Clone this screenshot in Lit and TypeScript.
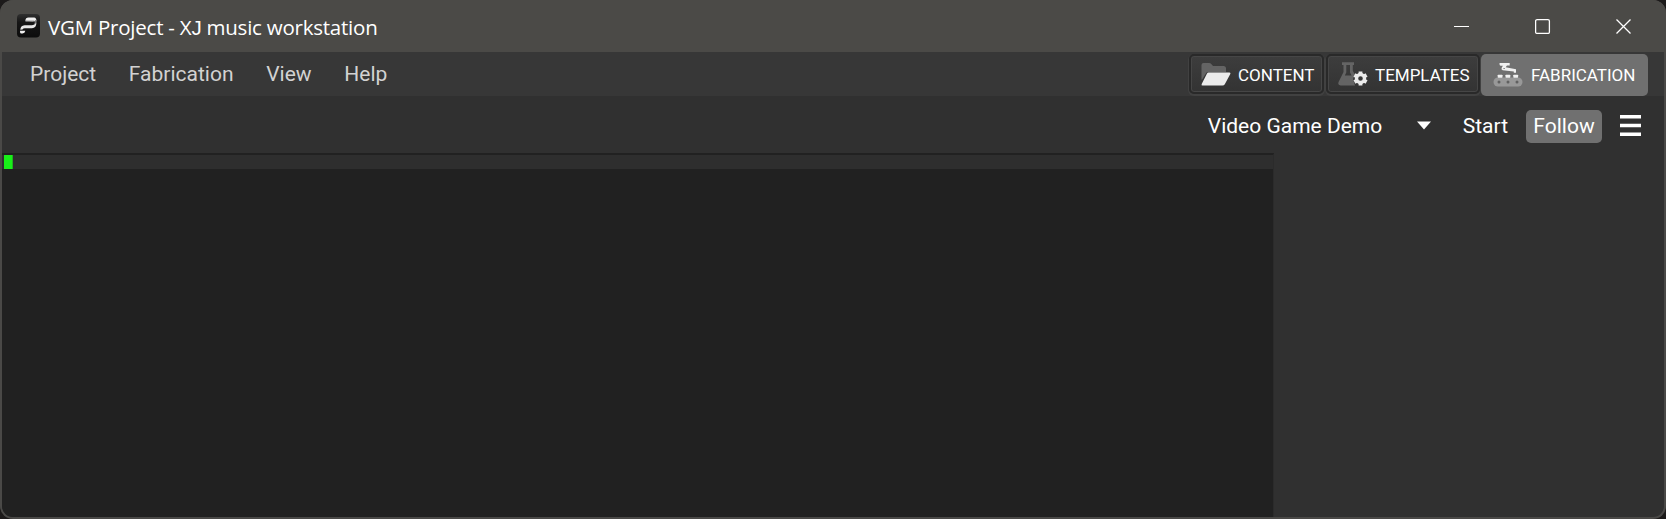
import { LitElement, html, css, svg } from "lit";
import { customElement } from "lit/decorators.js";

const logo = svg`<svg width="24" height="26" viewBox="0.5 -1 24 26">
  <defs><linearGradient id="lg" x1="0" y1="0" x2="0" y2="1"><stop offset="0" stop-color="#303030"/><stop offset="0.35" stop-color="#161616"/><stop offset="1" stop-color="#0c0c0c"/></linearGradient></defs>
  <rect x="0.5" y="0" width="23" height="23.5" rx="4" fill="url(#lg)"/>
  <path d="M8.800 6.800Q9 3.600 12 3.500H17.500Q20.300 3.800 19.800 7.500Z" fill="#f0f0f0"/>
  <path d="M18.800 6H20Q20.200 9.500 18.800 11L17.500 11.500Z" fill="#777"/>
  <path d="M9.500 6.200H18.500L16.500 7.400H8.800Z" fill="#bbb"/>
  <path d="M3.800 15.700Q4 11.500 8 11.200H15.500Q18.600 11 19.900 8.500Q19.900 14 15.500 14.300H8.500Q6.500 14.300 6 15.600Z" fill="#e6e6e6"/>
  <path d="M3.500 16.800H8.800Q8.400 19.300 6 19.600H4.300Q3.300 19 3.500 16.800Z" fill="#f0f0f0"/></svg>`;

const folder = svg`<svg width="30" height="24" viewBox="0 0 30 24">
  <path d="M0.500 17V3Q0.500 1 2.500 1H8Q9.500 1 10.500 2.200L12 4H22.500Q25 4 25 6.500V10H7Q5.800 10 5.200 11L0.800 18Z" fill="#646464"/>
  <path d="M7.500 10.500H28.500Q30 10.500 29.300 12L23.800 22.200Q23 23.500 21.500 23.500H1.500Q0 23.500 0.700 22L6 11.500Q6.500 10.500 7.500 10.500Z" fill="#ebebeb"/></svg>`;

const flask = svg`<svg width="30" height="24" viewBox="0 0 30 24">
  <path d="M4 0.200H16V3H14.800V9L17 12.500L15 17L17 23.500H2.500Q-0.700 23 0.700 19.700L5.500 10V3H4ZM8.300 3V10.500L6.800 13.500H13.600L12 10.500V3Z" fill="#646464" fill-rule="evenodd"/>
  <circle cx="22.500" cy="16.500" r="4" fill="none" stroke="#ebebeb" stroke-width="3.400"/>
  <g stroke="#ebebeb" stroke-width="3.800">${[0, 60, 120, 180, 240, 300].map(
    (a) => svg`<path d="M22.500 9.500V12" transform="rotate(${a} 22.500 16.500)"/>`
  )}</g></svg>`;

const conveyor = svg`<svg width="30" height="24" viewBox="0 0 30 24">
  <rect x="0.500" y="14.500" width="29" height="9" rx="4.500" fill="#989898"/>
  <g fill="#606060"><circle cx="6" cy="19" r="1.500"/><circle cx="15" cy="19" r="1.500"/><circle cx="24" cy="19" r="1.500"/></g>
  <g fill="#f0f0f0"><rect x="4.700" y="11.700" width="4.800" height="3" rx=".6"/><rect x="12.500" y="11.700" width="4.800" height="3" rx=".6"/><rect x="20.300" y="11.700" width="4.800" height="3" rx=".6"/>
  <path fill-rule="evenodd" d="M6.500 0H16.700V2.600H14L12.600 4.300L23 6.200V9.800H20.800V8.600L9.700 7.300Q7.800 6.500 8.700 4.700L9.900 2.800H7.500Q6.300 2.500 6.500 0ZM10.300 5.200V6.100H12V5.200Z"/></g></svg>`;

@customElement("app-root")
export class AppRoot extends LitElement {
  static styles = css`
    :host { display: block; width: 1666px; height: 519px; background: #1c1a1a; font-family: Roboto, sans-serif; }
    * { box-sizing: border-box; }
    svg { display: block; flex: none; }
    .window { height: 519px; border-radius: 13px; background: #4a4947; overflow: hidden; padding: 0 2px 2px; display: flex; flex-direction: column; }
    .title { height: 52px; flex: none; display: flex; align-items: center; padding: 0 31px 0 17px; background: #4b4a47; margin: 0 -2px; }
    .caption { margin-left: 7px; flex: 1; color: #fff; font: 20.500px/28px "Open Sans", sans-serif; letter-spacing: -0.230px; padding-top: 2px; white-space: nowrap; }
    .jay { font-family: "Liberation Sans", sans-serif; }
    .controls { display: flex; gap: 65px; padding-right: 3px; }
    .client { flex: 1; display: flex; flex-direction: column; border-radius: 0 0 11px 11px; overflow: hidden; background: #303030; }
    .menubar { height: 44px; flex: none; display: flex; justify-content: space-between; background: #373737; }
    .menus { display: flex; padding-left: 28px; gap: 32.700px; color: #d2d2d2; font-size: 21px; line-height: 44px; }
    .modes { display: flex; align-items: flex-start; gap: 2px; padding: 2px 16px 0 0; }
    .mode { height: 40px; display: flex; align-items: center; border: 2px solid #292929; border-radius: 5px; background: linear-gradient(#3d3d3d, #333); box-shadow: inset 0 0 0 1px #464646, 0 1px 0 1px #414141; color: #fff; font-size: 17px; padding-left: 10px; gap: 7px; }
    .mode span { padding-top: 2px; }
    .content { width: 135px; }
    .templates { width: 154px; }
    .fabrication { width: 167px; height: 42px; margin-left: -1px; border: 0; background: #707070; box-shadow: none; padding-left: 12px; gap: 8px; }
    .fabrication span { padding-top: 0; }
    .toolbar { height: 57px; flex: none; display: flex; justify-content: flex-end; align-items: center; color: #fff; font-size: 21px; padding: 2px 23px 0 0; }
    .arrow { margin: 0 32px 0 34.500px; }
    .follow { width: 76px; height: 33px; line-height: 32px; text-align: center; border-radius: 5px; background: #707070; margin: 1px 18px 0; }
    .work { flex: 1; display: flex; }
    .timeline { width: 1272px; background: #212121; display: flex; flex-direction: column; border-top: 2px solid #212121; border-right: 1px solid #2b2b2b; }
    .progress { height: 14px; background: #2e2e2e; padding-left: 2px; }
    .mark { height: 14px; width: 9px; background: #18f018; border-right: 1px solid #1fb51f; }
  `;

  render() {
    return html`<div class="window">
      <header class="title">
        ${logo}
        <div class="caption">VGM Project - X<span class="jay">J</span> music workstation</div>
        <div class="controls">
          <svg width="16" height="16"><path d="M0 8.500H15" stroke="#fff"/></svg>
          <svg width="16" height="16"><rect x="0.600" y="1.600" width="13.800" height="13.800" rx="1.500" fill="none" stroke="#fff" stroke-width="1.300"/></svg>
          <svg width="16" height="16"><path d="M0.500 1.500L14.500 15.500M14.500 1.500L0.500 15.500" stroke="#fff" stroke-width="1.300"/></svg>
        </div>
      </header>
      <main class="client">
        <nav class="menubar">
          <div class="menus">
            ${["Project", "Fabrication", "View", "Help"].map((m) => html`<span>${m}</span>`)}
          </div>
          <div class="modes">
            <div class="mode content">${folder}<span>CONTENT</span></div>
            <div class="mode templates">${flask}<span>TEMPLATES</span></div>
            <div class="mode fabrication">${conveyor}<span>FABRICATION</span></div>
          </div>
        </nav>
        <div class="toolbar">
          <span>Video Game Demo</span>
          <svg class="arrow" width="14" height="9"><path d="M0 0.500H14L7 8.500Z" fill="#fff"/></svg>
          <span>Start</span>
          <span class="follow">Follow</span>
          <svg width="21" height="21"><path d="M0 1.700H21M0 10.500H21M0 19.300H21" stroke="#fff" stroke-width="3.400"/></svg>
        </div>
        <section class="work">
          <div class="timeline"><div class="progress"><div class="mark"></div></div></div>
        </section>
      </main>
    </div>`;
  }
}
